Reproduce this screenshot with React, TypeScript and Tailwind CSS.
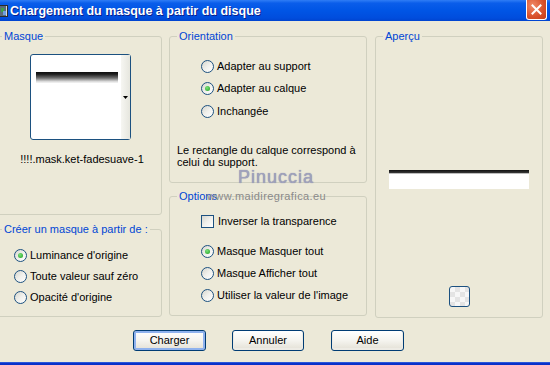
import React from "react";

function Radio({ checked }: { checked?: boolean }) {
  return (
    <span className="flex h-[13px] w-[13px] shrink-0 items-center justify-center rounded-full border border-[#1C5180] bg-gradient-to-br from-[#D6D6CE] via-[#F0F0EC] to-white">
      {checked && (
        <span className="h-[5px] w-[5px] rounded-full bg-[radial-gradient(circle_at_40%_35%,#7BE27B,#1E9E1E)]" />
      )}
    </span>
  );
}

function RadioRow({ label, checked, h }: { label: string; checked?: boolean; h: string }) {
  return (
    <div className={"flex items-center gap-[3px] " + h}>
      <Radio checked={checked} />
      <span className="whitespace-nowrap leading-[13px]">{label}</span>
    </div>
  );
}

function Group({
  label,
  className,
  children,
}: {
  label: string;
  className: string;
  children?: React.ReactNode;
}) {
  return (
    <fieldset className={"rounded-[3px] border border-[#D0D0BF] " + className}>
      <legend className="ml-[7px] px-[2px] leading-[13px] text-[#0046D5]">{label}</legend>
      {children}
    </fieldset>
  );
}

function Button({ label, def, className }: { label: string; def?: boolean; className: string }) {
  return (
    <div
      className={
        "flex h-[21px] items-center justify-center rounded-[3px] border border-[#003C74] bg-gradient-to-b from-white via-[#F5F4EF] to-[#E3E0D5] leading-[13px] " +
        (def ? "shadow-[inset_0_0_0_2px_#8FB2EE] " : "shadow-[inset_0_-1px_0_1px_#EDEBE4] ") +
        className
      }
    >
      {label}
    </div>
  );
}

export default function App() {
  return (
    <div className="relative flex h-[365px] w-[550px] flex-col overflow-hidden bg-[#ECE9D8] font-['Liberation_Sans',Arial,sans-serif] text-[11px] text-black">
      {/* Title bar */}
      <div className="flex h-[21px] shrink-0 items-center bg-[linear-gradient(to_bottom,#2F7DF5_0%,#0A5DEA_15%,#0055E5_50%,#004DDD_85%,#0044CF_100%)]">
        <svg width="8" height="12" viewBox="0 0 8 12" className="shrink-0">
          <rect x="0" y="0" width="8" height="12" fill="#2A2A2A" />
          <rect x="0" y="1" width="6" height="10" fill="#5A6B7A" />
          <rect x="1" y="3" width="3" height="4" fill="#3FA04A" />
          <rect x="3" y="6" width="3" height="4" fill="#6FA0E0" />
          <rect x="6" y="1" width="1" height="10" fill="#D8D8D8" />
        </svg>
        <span className="ml-[2px] whitespace-nowrap text-[12.5px] font-bold leading-[14px] text-white [text-shadow:1px_1px_0_#0A1E8C]">
          Chargement du masque à partir du disque
        </span>
        <div className="ml-auto mr-[3px] flex h-[20px] w-[21px] items-center justify-center self-start rounded-b-[3px] border border-t-0 border-white bg-[radial-gradient(circle_at_30%_30%,#F08A68,#D8502A_60%,#C23E1A)]">
          <svg width="11" height="11" viewBox="0 0 11 11">
            <path d="M1.5 1.5 L9.5 9.5 M9.5 1.5 L1.5 9.5" stroke="white" strokeWidth="2" strokeLinecap="square" />
          </svg>
        </div>
      </div>

      {/* Columns */}
      <div className="flex h-[297px] shrink-0 pt-[9px]">
        {/* Left column */}
        <div className="-ml-[6px] flex w-[168px] shrink-0 flex-col">
          <Group label="Masque" className="h-[185px]">
            <div className="flex flex-col items-center pl-[4px]">
              <div className="mt-[11px] flex h-[86px] w-[101px] rounded-[3px] border border-[#1C5180] bg-white">
                <div className="flex-1 pl-[5px] pt-[17px]">
                  <div className="h-[11px] w-[82px] bg-[linear-gradient(to_bottom,#0E0E0E_0%,#1E1E1E_20%,#707070_55%,#D8D8D8_85%,#F6F6F6_100%)]" />
                </div>
                <div className="flex w-[9px] items-center justify-center bg-gradient-to-r from-[#F6F6F2] to-[#E6E6DE]">
                  <svg width="5" height="3" viewBox="0 0 5 3">
                    <polygon points="0,0 5,0 2.5,3" fill="black" />
                  </svg>
                </div>
              </div>
              <div className="ml-[4px] mt-[13px] whitespace-nowrap leading-[13px]">!!!!.mask.ket-fadesuave-1</div>
            </div>
          </Group>
          <Group label="Créer un masque à partir de :" className="mt-[8px] h-[94px]">
            <div className="flex flex-col pl-[19px] pt-[9px]">
              <RadioRow label="Luminance d'origine" checked h="h-[21px]" />
              <RadioRow label="Toute valeur sauf zéro" h="h-[21px]" />
              <RadioRow label="Opacité d'origine" h="h-[21px]" />
            </div>
          </Group>
        </div>

        {/* Middle column */}
        <div className="ml-[7px] flex w-[198px] shrink-0 flex-col">
          <Group label="Orientation" className="h-[153px]">
            <div className="flex flex-col pl-[31px] pt-[12px]">
              <RadioRow label="Adapter au support" h="h-[22px]" />
              <RadioRow label="Adapter au calque" checked h="h-[23px]" />
              <RadioRow label="Inchangée" h="h-[22px]" />
            </div>
            <p className="ml-[7px] mt-[22px] leading-[12px]">
              Le rectangle du calque correspond à
              <br />
              celui du support.
            </p>
          </Group>
          <Group label="Options" className="mt-[7px] h-[126px]">
            <div className="flex flex-col pl-[31px] pt-[7px]">
              <div className="flex h-[22px] items-center gap-[4px]">
                <span className="h-[13px] w-[13px] shrink-0 border border-[#1C5180] bg-gradient-to-br from-[#D6D6CE] via-[#F0F0EC] to-white" />
                <span className="whitespace-nowrap leading-[13px]">Inverser la transparence</span>
              </div>
              <div className="mt-[9px] flex flex-col">
                <RadioRow label="Masque Masquer tout" checked h="h-[21px]" />
                <RadioRow label="Masque Afficher tout" h="h-[22px]" />
                <RadioRow label="Utiliser la valeur de l'image" h="h-[22px]" />
              </div>
            </div>
          </Group>
        </div>

        {/* Right column */}
        <div className="ml-[8px] flex w-[168px] shrink-0 flex-col">
          <Group label="Aperçu" className="h-[288px]">
            <div className="flex flex-col items-center">
              <div className="mt-[127px] flex w-[140px] flex-col">
                <div className="h-[3px] bg-gradient-to-b from-[#111] to-[#3A3A3A]" />
                <div className="h-[1px] bg-[#BDBDBD]" />
                <div className="h-[15px] bg-white" />
              </div>
              <div className="mt-[97px] h-[21px] w-[21px] rounded-[3px] border border-[#1C5180] bg-[repeating-conic-gradient(#E4E4E4_0%_25%,#F7F7F7_0%_50%)] bg-[length:10px_10px]" />
            </div>
          </Group>
        </div>
      </div>

      {/* Buttons */}
      <div className="mt-[12px] flex pl-[133px]">
        <Button label="Charger" def className="w-[73px]" />
        <Button label="Annuler" className="ml-[26px] w-[72px]" />
        <Button label="Aide" className="ml-[27px] w-[73px]" />
      </div>

      <div className="mt-auto h-[3px] shrink-0 bg-gradient-to-b from-[#3A66DE] via-[#0A32CC] to-[#0830C6]" />

      {/* Watermark */}
      <div className="pointer-events-none absolute left-[238px] top-[167px] text-[18px] leading-[20px] tracking-[1px] text-[#A0A2BC] [text-shadow:0_0_1px_#7C7EA0]">
        Pinuccia
      </div>
      <div className="pointer-events-none absolute left-[207px] top-[190px] text-[11px] leading-[13px] tracking-[0.4px] text-[#8A8A8A]">
        www.maidiregrafica.eu
      </div>
    </div>
  );
}
